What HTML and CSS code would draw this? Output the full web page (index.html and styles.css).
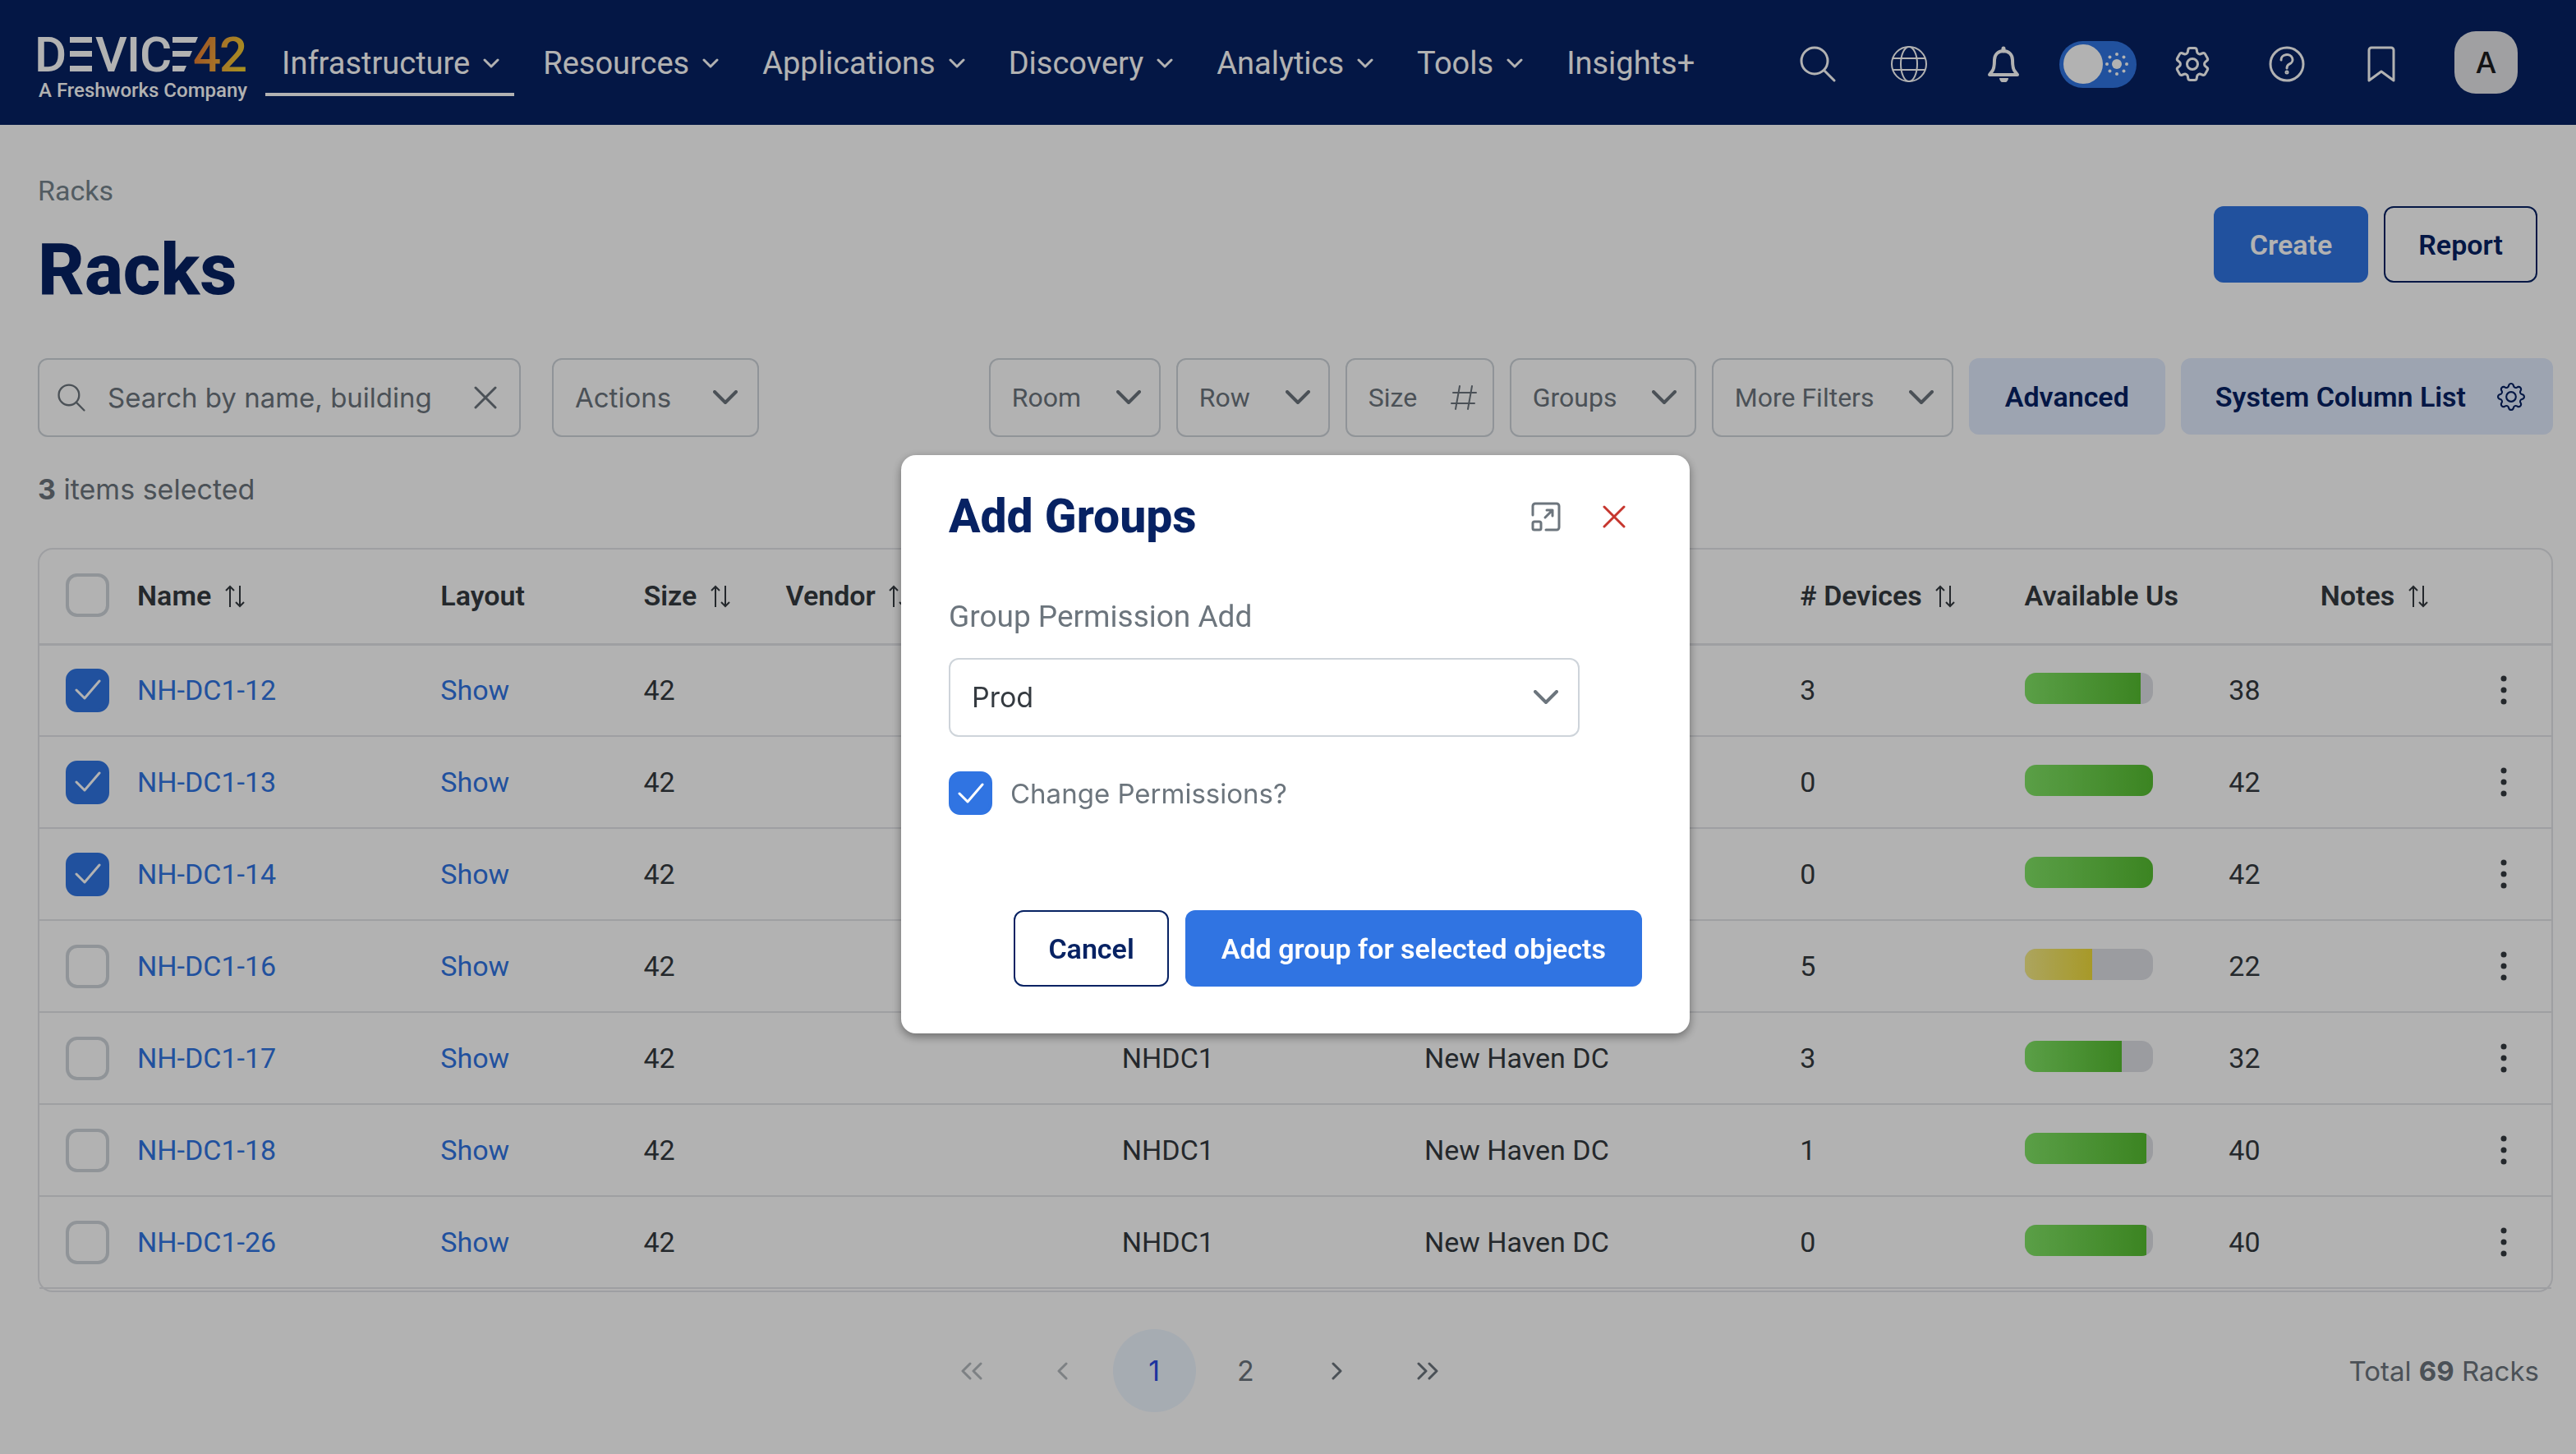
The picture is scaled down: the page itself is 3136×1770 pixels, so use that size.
FILE: index.html
```html
<!DOCTYPE html>
<html lang="en">
<head>
<meta charset="utf-8">
<title>Racks - Device42</title>
<meta name="viewport" content="width=device-width, initial-scale=1">
<link rel="stylesheet" href="styles.css">
</head>
<body>
<svg class="sprite" aria-hidden="true">
  <symbol id="chevron" viewBox="0 0 30 18"><path d="M2 2l13 13L28 2" fill="none" stroke="currentColor" stroke-width="4" stroke-linecap="round" stroke-linejoin="round"/></symbol>
  <symbol id="caret" viewBox="0 0 20 12"><path d="M2 2l8 8 8-8" fill="none" stroke="currentColor" stroke-width="3" stroke-linecap="round" stroke-linejoin="round"/></symbol>
  <symbol id="cross" viewBox="0 0 28 28"><path d="M2 2l24 24M26 2L2 26" fill="none" stroke="currentColor" stroke-width="3" stroke-linecap="round"/></symbol>
  <symbol id="sort" viewBox="0 0 24 28"><path d="M6 27V2M1 7l5-5 5 5M18 1v25M13 21l5 5 5-5" fill="none" stroke="currentColor" stroke-width="2"/></symbol>
  <symbol id="dots" viewBox="0 0 8 36"><g fill="currentColor"><circle cx="4" cy="4" r="3.500"/><circle cx="4" cy="18" r="3.500"/><circle cx="4" cy="32" r="3.500"/></g></symbol>
  <symbol id="search" viewBox="0 0 44 44"><path d="M30 30l12 12" stroke="currentColor" stroke-width="3" stroke-linecap="round"/><circle cx="18" cy="18" r="16" fill="none" stroke="currentColor" stroke-width="3"/></symbol>
</svg>

<header class="topbar">
  <a class="logo" href="#" aria-label="Device42">
    <svg class="brand" width="252" height="48" viewBox="45 44 252 48" aria-hidden="true">
      <defs><linearGradient id="amber" gradientUnits="userSpaceOnUse" x1="237" y1="60" x2="297" y2="76"><stop offset="0" stop-color="#e57a32"/><stop offset=".5" stop-color="#eda63a"/><stop offset="1" stop-color="#f0cc30"/></linearGradient></defs>
      <g class="wordmark" fill="#fff">
        <text x="42" y="88">D</text><text x="116" y="88">V</text><text x="154" y="88">I</text><text x="170" y="88">C</text>
        <path d="M85 46h27v7H85zM85 63h27v7H85zM85 81h27v7H85zM210 46h31l-3 7h-28zM210 63h24l-3 7h-21zM210 81h17l-3 7h-14z"/>
      </g>
      <g class="wordmark" fill="url(#amber)"><text x="235" y="88">4</text><text x="267" y="88">2</text></g>
    </svg>
    <span class="tagline">A Freshworks Company</span>
  </a>
  <nav class="menu" aria-label="Main">
    <a class="menu-item active" href="#">Infrastructure <svg class="caret"><use href="#caret"/></svg></a>
    <a class="menu-item" href="#">Resources <svg class="caret"><use href="#caret"/></svg></a>
    <a class="menu-item" href="#">Applications <svg class="caret"><use href="#caret"/></svg></a>
    <a class="menu-item" href="#">Discovery <svg class="caret"><use href="#caret"/></svg></a>
    <a class="menu-item" href="#">Analytics <svg class="caret"><use href="#caret"/></svg></a>
    <a class="menu-item" href="#">Tools <svg class="caret"><use href="#caret"/></svg></a>
    <a class="menu-item" href="#">Insights+</a>
  </nav>
  <div class="tools">
    <button class="tool tool-search" type="button" aria-label="Search"><svg width="44" height="44"><use href="#search"/></svg></button>
    <button class="tool" type="button" aria-label="Language"><svg width="44" height="44" viewBox="0 0 44 44" fill="none" stroke="currentColor" stroke-width="2"><circle cx="22" cy="22" r="21"/><ellipse cx="22" cy="22" rx="10" ry="21"/><path d="M3 15h38M3 29h38"/></svg></button>
    <button class="tool" type="button" aria-label="Notifications"><svg width="44" height="44" viewBox="0 0 44 44"><path d="M22 6c-7 0-11 5-11 11 0 9-1 12-3 14l-3 4h34l-3-4c-2-2-3-5-3-14 0-6-4-11-11-11z" fill="none" stroke="currentColor" stroke-width="4" stroke-linejoin="round"/><path d="M22 3v3" stroke="currentColor" stroke-width="5" stroke-linecap="round"/><path d="M17 39h11a5 5 0 0 1-11 0z" fill="currentColor"/></svg></button>
    <div class="tool">
      <label class="theme">
        <input type="checkbox" role="switch" aria-label="Light theme">
        <svg width="28" height="28" viewBox="0 0 28 28" fill="#fff"><circle cx="14" cy="14" r="6"/><circle cx="14" cy="2" r="2"/><circle cx="14" cy="26" r="2"/><circle cx="2" cy="14" r="2"/><circle cx="26" cy="14" r="2"/><circle cx="5.500" cy="5.500" r="2"/><circle cx="22.500" cy="5.500" r="2"/><circle cx="5.500" cy="22.500" r="2"/><circle cx="22.500" cy="22.500" r="2"/></svg>
      </label>
    </div>
    <button class="tool" type="button" aria-label="Settings"><svg width="52" height="52" viewBox="0 0 24 24" fill="none" stroke="currentColor" stroke-width="1.4" stroke-linejoin="round"><path d="M9.594 3.94c.09-.542.56-.94 1.11-.94h2.593c.55 0 1.02.398 1.11.94l.213 1.281c.063.374.313.686.645.87.074.04.147.083.22.127.325.196.72.257 1.075.124l1.217-.456a1.125 1.125 0 0 1 1.37.49l1.296 2.247a1.125 1.125 0 0 1-.26 1.431l-1.003.827c-.293.241-.438.613-.43.992a7.723 7.723 0 0 1 0 .255c-.008.378.137.75.43.991l1.004.827c.424.35.534.955.26 1.43l-1.298 2.247a1.125 1.125 0 0 1-1.369.491l-1.217-.456c-.355-.133-.75-.072-1.076.124a6.47 6.47 0 0 1-.22.128c-.331.183-.581.495-.644.869l-.213 1.281c-.09.543-.56.94-1.11.94h-2.594c-.55 0-1.019-.398-1.11-.94l-.213-1.281c-.062-.374-.312-.686-.644-.87a6.52 6.52 0 0 1-.22-.127c-.325-.196-.72-.257-1.076-.124l-1.217.456a1.125 1.125 0 0 1-1.369-.49l-1.297-2.247a1.125 1.125 0 0 1 .26-1.431l1.004-.827c.292-.24.437-.613.43-.991a6.932 6.932 0 0 1 0-.255c.007-.38-.138-.751-.43-.992l-1.004-.827a1.125 1.125 0 0 1-.26-1.43l1.297-2.247a1.125 1.125 0 0 1 1.37-.491l1.216.456c.356.133.751.072 1.076-.124.072-.044.146-.086.22-.128.332-.183.582-.495.644-.869l.214-1.28Z"/><circle cx="12" cy="12" r="3"/></svg></button>
    <button class="tool" type="button" aria-label="Help"><svg width="44" height="44" viewBox="0 0 44 44" fill="none" stroke="currentColor" stroke-width="3" stroke-linecap="round"><circle cx="22" cy="22" r="20"/><path d="M15 17a7 6 0 1 1 10 5c-2 1-3 2-3 5"/><circle cx="22" cy="32" r="1"/></svg></button>
    <button class="tool" type="button" aria-label="Bookmarks"><svg width="36" height="44" viewBox="0 0 36 44" fill="none" stroke="currentColor" stroke-width="3" stroke-linejoin="round"><path d="M3 42V5a3 3 0 0 1 3-3h24a3 3 0 0 1 3 3v37L18 31z"/></svg></button>
    <button class="avatar" type="button">A</button>
  </div>
</header>

<main class="page">
  <div class="page-head">
    <div>
      <a class="crumb" href="#">Racks</a>
      <h1>Racks</h1>
    </div>
    <div class="page-actions">
      <button class="btn btn-primary" type="button">Create</button>
      <button class="btn btn-outline" type="button">Report</button>
    </div>
  </div>

  <div class="filters">
    <div class="search-box">
      <svg width="34" height="34"><use href="#search"/></svg>
      <input type="text" placeholder="Search by name, building" aria-label="Search by name, building">
      <button class="icon-btn" type="button" aria-label="Clear search"><svg width="28" height="28"><use href="#cross"/></svg></button>
    </div>
    <div class="pick pick-actions"><select aria-label="Actions"><option>Actions</option></select><svg class="chevron"><use href="#chevron"/></svg></div>
    <div class="filter-group">
      <div class="pick"><select aria-label="Room"><option>Room</option></select><svg class="chevron"><use href="#chevron"/></svg></div>
      <div class="pick"><select aria-label="Row"><option>Row</option></select><svg class="chevron"><use href="#chevron"/></svg></div>
      <div class="pick"><input class="size-filter" type="text" placeholder="Size" aria-label="Size"><svg class="hash" width="32" height="30" viewBox="0 0 32 30" fill="none" stroke="currentColor" stroke-width="2" stroke-linecap="round"><path d="M3 9h28M1 22h28M11 1L6 29M26 1l-5 28"/></svg></div>
      <div class="pick"><select aria-label="Groups"><option>Groups</option></select><svg class="chevron"><use href="#chevron"/></svg></div>
      <div class="pick"><select aria-label="More Filters"><option>More Filters</option></select><svg class="chevron"><use href="#chevron"/></svg></div>
      <button class="btn btn-soft" type="button">Advanced</button>
      <button class="btn btn-soft btn-columns" type="button">System Column List
        <svg width="34" height="34" viewBox="0 0 16 16" fill="currentColor"><path d="M8 4.754a3.246 3.246 0 1 0 0 6.492 3.246 3.246 0 0 0 0-6.492zM5.754 8a2.246 2.246 0 1 1 4.492 0 2.246 2.246 0 0 1-4.492 0z"/><path d="M9.796 1.343c-.527-1.79-3.065-1.79-3.592 0l-.094.319a.873.873 0 0 1-1.255.52l-.292-.16c-1.64-.892-3.433.902-2.54 2.541l.159.292a.873.873 0 0 1-.52 1.255l-.319.094c-1.79.527-1.79 3.065 0 3.592l.319.094a.873.873 0 0 1 .52 1.255l-.16.292c-.892 1.64.901 3.434 2.541 2.54l.292-.159a.873.873 0 0 1 1.255.52l.094.319c.527 1.79 3.065 1.79 3.592 0l.094-.319a.873.873 0 0 1 1.255-.52l.292.16c1.64.893 3.434-.902 2.54-2.541l-.159-.292a.873.873 0 0 1 .52-1.255l.319-.094c1.79-.527 1.79-3.065 0-3.592l-.319-.094a.873.873 0 0 1-.52-1.255l.16-.292c.893-1.64-.902-3.433-2.541-2.54l-.292.159a.873.873 0 0 1-1.255-.52l-.094-.319zm-2.633.283c.246-.835 1.428-.835 1.674 0l.094.319a1.873 1.873 0 0 0 2.693 1.115l.291-.16c.764-.415 1.6.42 1.184 1.185l-.159.292a1.873 1.873 0 0 0 1.116 2.692l.318.094c.835.246.835 1.428 0 1.674l-.319.094a1.873 1.873 0 0 0-1.115 2.693l.16.291c.415.764-.42 1.6-1.185 1.184l-.291-.159a1.873 1.873 0 0 0-2.693 1.116l-.094.318c-.246.835-1.428.835-1.674 0l-.094-.319a1.873 1.873 0 0 0-2.692-1.115l-.292.16c-.764.415-1.6-.42-1.184-1.185l.159-.291A1.873 1.873 0 0 0 1.945 8.93l-.319-.094c-.835-.246-.835-1.428 0-1.674l.319-.094A1.873 1.873 0 0 0 3.06 4.377l-.16-.292c-.415-.764.42-1.6 1.185-1.184l.292.159a1.873 1.873 0 0 0 2.692-1.115l.094-.319z"/></svg>
      </button>
    </div>
  </div>

  <p class="selected"><strong>3</strong> items selected</p>

  <div class="card">
    <table class="racks">
      <colgroup><col class="c-check"><col class="c-name"><col class="c-layout"><col class="c-size"><col class="c-vendor"><col class="c-building"><col class="c-room"><col class="c-devices"><col class="c-avail"><col class="c-notes"></colgroup>
      <thead>
        <tr>
          <th><input class="tick" type="checkbox" aria-label="Select all"></th>
          <th>Name <svg class="sort"><use href="#sort"/></svg></th>
          <th>Layout</th>
          <th>Size <svg class="sort"><use href="#sort"/></svg></th>
          <th>Vendor <svg class="sort"><use href="#sort"/></svg></th>
          <th></th>
          <th></th>
          <th># Devices <svg class="sort"><use href="#sort"/></svg></th>
          <th>Available Us</th>
          <th>Notes <svg class="sort"><use href="#sort"/></svg></th>
        </tr>
      </thead>
      <tbody>
        <tr><td><input class="tick" type="checkbox" checked aria-label="Select NH-DC1-12"></td><td><a href="#">NH-DC1-12</a></td><td><a href="#">Show</a></td><td>42</td><td></td><td></td><td></td><td>3</td><td><div class="usage"><span class="bar"><span class="fill" style="width:91%"></span></span><span class="count">38</span></div></td><td class="more"><button class="icon-btn" type="button" aria-label="Row actions"><svg width="8" height="36"><use href="#dots"/></svg></button></td></tr>
        <tr><td><input class="tick" type="checkbox" checked aria-label="Select NH-DC1-13"></td><td><a href="#">NH-DC1-13</a></td><td><a href="#">Show</a></td><td>42</td><td></td><td></td><td></td><td>0</td><td><div class="usage"><span class="bar"><span class="fill" style="width:100%"></span></span><span class="count">42</span></div></td><td class="more"><button class="icon-btn" type="button" aria-label="Row actions"><svg width="8" height="36"><use href="#dots"/></svg></button></td></tr>
        <tr><td><input class="tick" type="checkbox" checked aria-label="Select NH-DC1-14"></td><td><a href="#">NH-DC1-14</a></td><td><a href="#">Show</a></td><td>42</td><td></td><td></td><td></td><td>0</td><td><div class="usage"><span class="bar"><span class="fill" style="width:100%"></span></span><span class="count">42</span></div></td><td class="more"><button class="icon-btn" type="button" aria-label="Row actions"><svg width="8" height="36"><use href="#dots"/></svg></button></td></tr>
        <tr><td><input class="tick" type="checkbox" aria-label="Select NH-DC1-16"></td><td><a href="#">NH-DC1-16</a></td><td><a href="#">Show</a></td><td>42</td><td></td><td></td><td></td><td>5</td><td><div class="usage"><span class="bar"><span class="fill fill-mid" style="width:53%"></span></span><span class="count">22</span></div></td><td class="more"><button class="icon-btn" type="button" aria-label="Row actions"><svg width="8" height="36"><use href="#dots"/></svg></button></td></tr>
        <tr><td><input class="tick" type="checkbox" aria-label="Select NH-DC1-17"></td><td><a href="#">NH-DC1-17</a></td><td><a href="#">Show</a></td><td>42</td><td></td><td>NHDC1</td><td>New Haven DC</td><td>3</td><td><div class="usage"><span class="bar"><span class="fill" style="width:76%"></span></span><span class="count">32</span></div></td><td class="more"><button class="icon-btn" type="button" aria-label="Row actions"><svg width="8" height="36"><use href="#dots"/></svg></button></td></tr>
        <tr><td><input class="tick" type="checkbox" aria-label="Select NH-DC1-18"></td><td><a href="#">NH-DC1-18</a></td><td><a href="#">Show</a></td><td>42</td><td></td><td>NHDC1</td><td>New Haven DC</td><td>1</td><td><div class="usage"><span class="bar"><span class="fill" style="width:95%"></span></span><span class="count">40</span></div></td><td class="more"><button class="icon-btn" type="button" aria-label="Row actions"><svg width="8" height="36"><use href="#dots"/></svg></button></td></tr>
        <tr><td><input class="tick" type="checkbox" aria-label="Select NH-DC1-26"></td><td><a href="#">NH-DC1-26</a></td><td><a href="#">Show</a></td><td>42</td><td></td><td>NHDC1</td><td>New Haven DC</td><td>0</td><td><div class="usage"><span class="bar"><span class="fill" style="width:95%"></span></span><span class="count">40</span></div></td><td class="more"><button class="icon-btn" type="button" aria-label="Row actions"><svg width="8" height="36"><use href="#dots"/></svg></button></td></tr>
      </tbody>
    </table>
  </div>

  <footer class="table-foot">
    <nav class="pager" aria-label="Pagination">
      <button class="page-btn" type="button" disabled aria-label="First page"><svg width="28" height="22" viewBox="0 0 28 22"><path d="M12 2l-9 9 9 9M25 2l-9 9 9 9"/></svg></button>
      <button class="page-btn" type="button" disabled aria-label="Previous page"><svg width="14" height="22" viewBox="0 0 14 22"><path d="M11 2l-9 9 9 9"/></svg></button>
      <button class="page-btn current" type="button" aria-current="page">1</button>
      <button class="page-btn" type="button">2</button>
      <button class="page-btn" type="button" aria-label="Next page"><svg width="14" height="22" viewBox="0 0 14 22"><path d="M3 2l9 9-9 9"/></svg></button>
      <button class="page-btn" type="button" aria-label="Last page"><svg width="28" height="22" viewBox="0 0 28 22"><path d="M3 2l9 9-9 9M16 2l9 9-9 9"/></svg></button>
    </nav>
    <p class="total">Total <strong>69</strong> Racks</p>
  </footer>
</main>

<div class="overlay">
  <section class="modal" role="dialog" aria-modal="true" aria-labelledby="modal-title">
    <div class="modal-head">
      <h2 id="modal-title">Add Groups</h2>
      <button class="icon-btn expand" type="button" aria-label="Maximize"><svg width="36" height="36" viewBox="0 0 36 36" fill="none" stroke="currentColor" stroke-width="3" stroke-linecap="round" stroke-linejoin="round"><path d="M2 16V5a3 3 0 0 1 3-3h26a3 3 0 0 1 3 3v26a3 3 0 0 1-3 3H18"/><rect x="2" y="24" width="10" height="10" rx="2"/><path d="M17 19l9-9M19 10h7v7"/></svg></button>
      <button class="icon-btn close" type="button" aria-label="Close"><svg width="28" height="28"><use href="#cross"/></svg></button>
    </div>
    <label class="field-label" for="group">Group Permission Add</label>
    <div class="pick pick-modal"><select id="group"><option>Prod</option></select><svg class="chevron"><use href="#chevron"/></svg></div>
    <label class="check-row"><input class="tick" type="checkbox" checked> Change Permissions?</label>
    <div class="modal-actions">
      <button class="btn btn-outline" type="button">Cancel</button>
      <button class="btn btn-primary" type="button">Add group for selected objects</button>
    </div>
  </section>
</div>
</body>
</html>
```

FILE: styles.css
```css
:root {
  --navy: #072263;
  --blue: #3074e2;
  --muted: #6c757d;
  --ink: #343a40;
  --line: #ced4da;
  --rule: #e3e4e8;
}

* { box-sizing: border-box; }

body {
  margin: 0;
  background: #fff;
  color: var(--ink);
  font: 400 34px/40px Roboto, sans-serif;
}

h1, h2, p { margin: 0; }
a { color: var(--blue); text-decoration: none; }
svg { display: block; flex: none; }
button, input, select { font: inherit; color: inherit; margin: 0; }
.sprite { position: absolute; width: 0; height: 0; }

.icon-btn {
  display: flex;
  padding: 0;
  border: 0;
  background: none;
}

/* Top bar */
.topbar {
  display: flex;
  align-items: center;
  height: 152px;
  padding: 0 71px 0 45px;
  background: var(--navy);
  color: #fff;
}
.logo { display: grid; gap: 3px; padding-top: 16px; color: #fff; }
.brand { overflow: visible; }
.wordmark { font: 500 60px Roboto, sans-serif; }
.tagline { padding-left: 2px; font: 500 24px/32px Roboto, sans-serif; white-space: nowrap; }

.menu { display: flex; gap: 15px; margin-left: 22px; }
.menu-item {
  display: flex;
  align-items: center;
  gap: 16px;
  height: 82px;
  padding: 5px 18px 0 20px;
  border-bottom: 4px solid transparent;
  color: #fff;
  font-size: 38px;
}
.menu-item.active { border-color: #fff; }
.caret { width: 20px; height: 12px; }

.tools { display: flex; align-items: center; margin-left: auto; }
.tool {
  display: flex;
  justify-content: center;
  width: 115px;
  padding: 4px 0 0;
  border: 0;
  background: none;
  color: #fff;
}
.tool-search { padding-left: 8px; }
.theme { display: grid; align-items: center; }
.theme > * { grid-area: 1 / 1; }
.theme input {
  appearance: none;
  display: flex;
  align-items: center;
  width: 94px;
  height: 57px;
  padding-left: 5px;
  border-radius: 29px;
  background: var(--blue);
}
.theme input::before {
  content: "";
  width: 48px;
  height: 48px;
  border-radius: 50%;
  background: #fff;
}
.theme svg { justify-self: end; margin-right: 10px; }
.avatar {
  width: 77px;
  height: 76px;
  margin-left: 32px;
  padding: 0;
  border: 0;
  border-radius: 26px;
  background: #e5e5e8;
  color: #1c1c1e;
  font: 500 36px/40px Inter, sans-serif;
}

/* Page heading */
.page { padding: 0 28px 0 46px; }
.page-head {
  display: flex;
  justify-content: space-between;
  padding: 60px 19px 0 0;
}
.crumb { display: block; color: #76848d; }
h1 { margin-top: 26px; color: var(--navy); font-size: 88px; line-height: 100px; font-weight: 800; }
.page-actions { display: flex; gap: 19px; padding-top: 39px; }

.btn {
  display: flex;
  align-items: center;
  justify-content: center;
  height: 93px;
  padding: 0 44px;
  border: 0;
  border-radius: 12px;
  font-weight: 600;
  white-space: nowrap;
}
.btn-primary { background: var(--blue); color: #fff; }
.btn-outline { padding: 0 40px; border: 2px solid var(--navy); background: none; color: var(--navy); }
.btn-soft { background: #e1ebfe; color: var(--navy); }
.btn-columns { gap: 38px; padding: 0 34px 0 42px; }

/* Filters */
.filters { display: flex; margin-top: 58px; color: var(--muted); }
.search-box {
  display: flex;
  align-items: center;
  width: 588px;
  height: 96px;
  margin-right: 38px;
  padding: 0 27px 0 22px;
  border: 2px solid var(--line);
  border-radius: 12px;
}
.search-box input {
  flex: 1;
  min-width: 0;
  padding: 0 0 0 27px;
  border: 0;
  background: none;
  font-family: Inter, sans-serif;
  font-size: 33px;
}
::placeholder { color: var(--muted); opacity: 1; }

.pick { display: grid; align-items: center; }
.pick > * { grid-area: 1 / 1; }
.pick select, .size-filter {
  appearance: none;
  height: 96px;
  padding: 0 94px 0 26px;
  border: 2px solid var(--line);
  border-radius: 12px;
  background: none;
}
.pick svg { justify-self: end; margin-right: 24px; pointer-events: none; }
.chevron { width: 30px; height: 18px; }
.pick .size-filter { width: 181px; padding-right: 60px; }
.pick .hash { margin-right: 21px; }
.filter-group { display: flex; gap: 19px; margin-left: auto; }
.filter-group .pick { font-size: 32px; }
.pick-actions select { padding-right: 104px; font-family: Inter, sans-serif; font-size: 33px; }
.pick-actions .chevron { margin-right: 26px; }

.selected { margin-top: 44px; color: var(--muted); font-family: Inter, sans-serif; }
strong { font-weight: 700; }

/* Table */
.card {
  margin-top: 51px;
  padding-bottom: 2px;
  border: 2px solid var(--rule);
  border-radius: 18px;
}
.racks { width: 100%; table-layout: fixed; border-collapse: collapse; }
.c-check { width: 119px; }
.c-name { width: 369px; }
.c-layout { width: 247px; }
.c-size { width: 173px; }
.c-vendor { width: 409px; }
.c-building { width: 368px; }
.c-room { width: 457px; }
.c-devices { width: 273px; }
.c-avail { width: 360px; }
.c-notes { width: 281px; }
.racks th, .racks td {
  height: 112px;
  padding: 0;
  border-bottom: 2px solid var(--rule);
  text-align: left;
  font-weight: 400;
  white-space: nowrap;
}
.racks th { height: 115px; padding-bottom: 2px; border-bottom-width: 3px; font-weight: 600; }
.racks th:first-child, .racks td:first-child { padding-left: 32px; }
.sort { display: inline-block; width: 24px; height: 28px; margin-left: 8px; vertical-align: -3px; }
.racks .more { padding-right: 54px; }
.more .icon-btn { margin-left: auto; }

.tick {
  appearance: none;
  display: block;
  width: 53px;
  height: 53px;
  border: 4px solid var(--line);
  border-radius: 14px;
  background: #fff;
}
.tick:checked {
  border-color: var(--blue);
  background: var(--blue) url("data:image/svg+xml,%3Csvg xmlns='http://www.w3.org/2000/svg' viewBox='0 0 32 28'%3E%3Cpath d='M2 14l10 10L30 3' fill='none' stroke='white' stroke-width='3' stroke-linecap='round' stroke-linejoin='round'/%3E%3C/svg%3E") center / 32px 28px no-repeat;
}

.usage { display: flex; align-items: center; width: 287px; }
.bar { width: 156px; height: 38px; margin-bottom: 4px; overflow: hidden; border-radius: 14px; background: #dee0e6; }
.fill { display: block; height: 100%; background: linear-gradient(90deg, #82e466, #56be31); }
.fill-mid { background: linear-gradient(90deg, #f6ec88, #f0dc3a); }
.count { margin-left: auto; }

/* Pagination */
.table-foot { display: flex; align-items: center; padding: 45px 17px 47px 16px; color: var(--muted); font-family: Inter, sans-serif; }
.pager { display: flex; flex: 1; justify-content: center; gap: 10px; }
.page-btn {
  display: flex;
  align-items: center;
  justify-content: center;
  width: 101px;
  height: 101px;
  padding: 0;
  border: 0;
  border-radius: 50%;
  background: none;
}
.page-btn path { fill: none; stroke: currentColor; stroke-width: 3; stroke-linecap: round; stroke-linejoin: round; }
.page-btn:disabled { color: #b4b9bd; }
.page-btn.current { background: #eef6ff; color: #2a4be3; }
.total { font-size: 33px; white-space: nowrap; }

/* Dialog */
.overlay {
  position: fixed;
  inset: 0;
  display: flex;
  align-items: center;
  justify-content: center;
  padding: 42px 0 0 18px;
  background: rgba(0, 0, 0, .3);
}
.modal {
  width: 960px;
  padding: 43px 58px 57px;
  border-radius: 18px;
  background: #fff;
  box-shadow: 0 4px 12px rgba(0, 0, 0, .4);
}
.modal-head { display: flex; align-items: center; }
h2 { margin-right: auto; color: var(--navy); font-size: 57px; line-height: 64px; font-weight: 800; }
.expand { margin-right: 51px; color: var(--muted); }
.close { margin-right: 20px; color: #c6362e; }
.field-label { display: block; margin-top: 68px; color: var(--muted); font-size: 37px; line-height: 44px; }
.pick-modal { width: 768px; margin-top: 28px; color: var(--muted); }
.pick-modal select { width: 100%; color: var(--ink); font-family: Inter, sans-serif; }
.pick-modal .chevron { margin-right: 26px; }
.check-row {
  display: flex;
  align-items: center;
  gap: 22px;
  margin-top: 42px;
  color: var(--muted);
  font-family: Inter, sans-serif;
  font-size: 33px;
}
.modal-actions { display: flex; justify-content: flex-end; gap: 20px; margin-top: 116px; }
```
